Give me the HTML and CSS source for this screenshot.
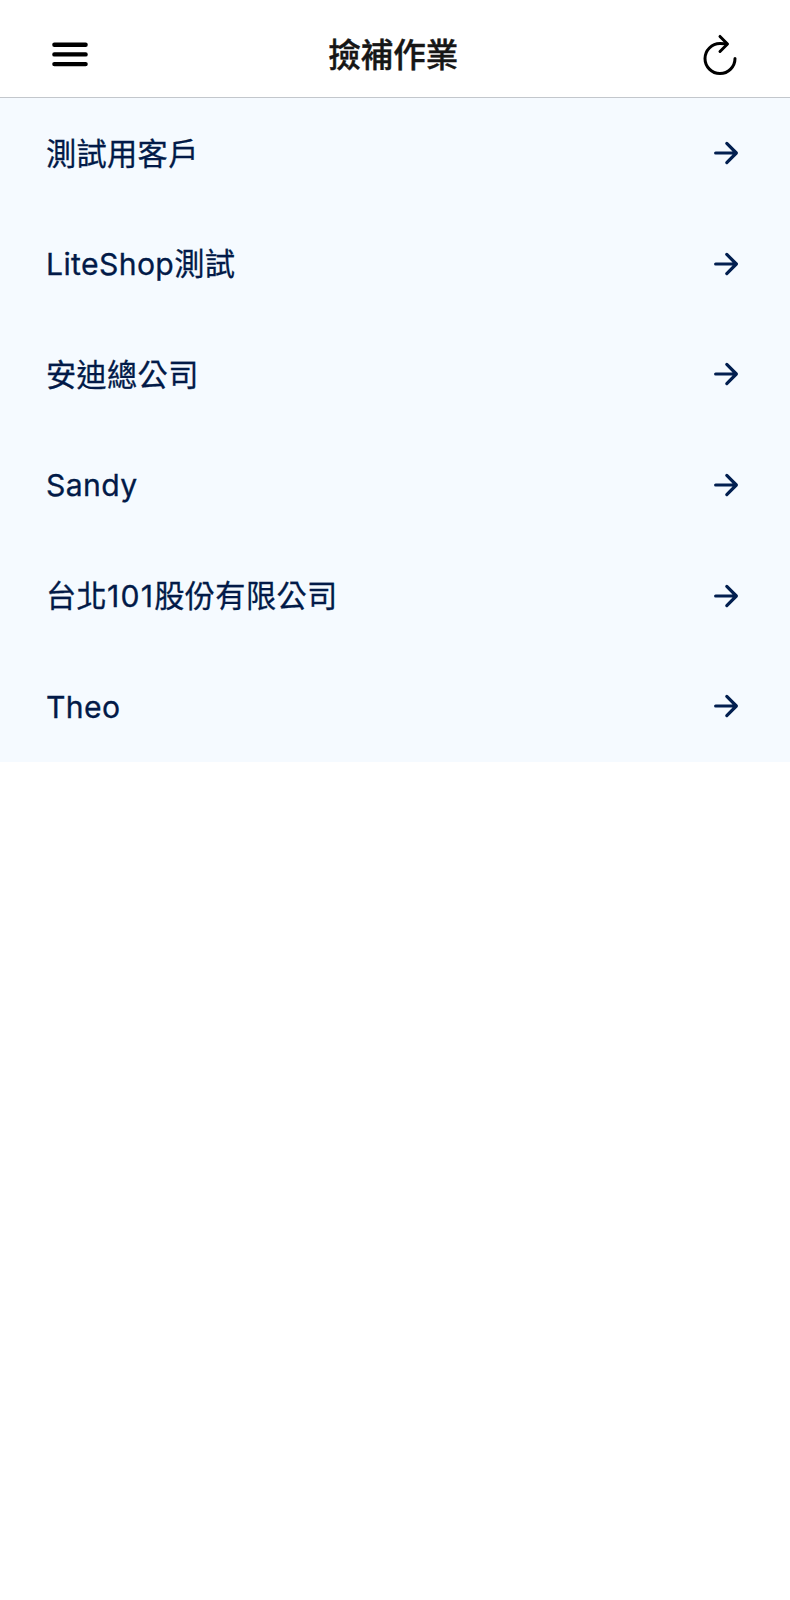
FILE: index.html
```html
<!DOCTYPE html>
<html lang="zh-Hant">
<head>
<meta charset="utf-8">
<title>撿補作業</title>
<link rel="stylesheet" href="styles.css">
</head>
<body>
<svg class="symbols" aria-hidden="true">
  <symbol id="arrow" viewBox="0 0 512 512"><path d="M268 112l144 144-144 144M392 256H100"/></symbol>
</svg>
<header class="header">
  <svg class="menu" viewBox="0 0 36 26"><path d="M2.4 2.7h31.2M2.4 12.4h31.2M2.4 22.1h31.2"/></svg>
  <h1 class="title">撿補作業</h1>
  <svg class="refresh" viewBox="0 0 512 512"><path d="M320 146s24.36-12-64-12a160 160 0 1 0 160 160"/><path d="M256 58l80 80-80 80"/></svg>
</header>
<main class="list">
  <div class="row"><span class="name">測試用客戶</span><svg class="arrow"><use href="#arrow"/></svg></div>
  <div class="row"><span class="name">LiteShop測試</span><svg class="arrow"><use href="#arrow"/></svg></div>
  <div class="row"><span class="name">安迪總公司</span><svg class="arrow"><use href="#arrow"/></svg></div>
  <div class="row"><span class="name">Sandy</span><svg class="arrow"><use href="#arrow"/></svg></div>
  <div class="row"><span class="name">台北<span class="digits">101</span>股份有限公司</span><svg class="arrow"><use href="#arrow"/></svg></div>
  <div class="row"><span class="name">Theo</span><svg class="arrow"><use href="#arrow"/></svg></div>
</main>
</body>
</html>
```
FILE: styles.css
```css
body {
  margin: 0;
  background: #fff;
  font-family: Inter, "Noto Sans CJK TC", sans-serif;
}
.symbols {
  display: none;
}
.header {
  box-sizing: border-box;
  height: 98px;
  padding: 12px 46px 0 51.5px;
  border-bottom: 1px solid #c3c7cc;
  display: grid;
  grid-template-columns: 48px 1fr 48px;
  align-items: center;
}
.menu {
  width: 36px;
  height: 26px;
  fill: none;
  stroke: #000;
  stroke-width: 4.4;
  stroke-linecap: round;
}
.title {
  margin: 0;
  padding: 3px 9px 0 0;
  text-align: center;
  font-size: 32.5px;
  line-height: 40px;
  font-weight: 500;
  -webkit-text-stroke: 0.4px #161616;
  color: #161616;
}
.refresh {
  width: 48px;
  height: 48px;
  fill: none;
  stroke: #000;
  stroke-width: 32;
  stroke-linecap: round;
  stroke-linejoin: round;
}
.list {
  background: #f5faff;
}
.row {
  box-sizing: border-box;
  height: 110.6px;
  padding: 0.8px 47px 0 46px;
  display: flex;
  align-items: center;
  justify-content: space-between;
}
.name {
  font-size: 30.2px;
  line-height: 40px;
  letter-spacing: 0.35px;
  -webkit-text-stroke: 0.3px #021a48;
  color: #021a48;
}
.digits {
  letter-spacing: 1.2px;
}
.arrow {
  width: 34px;
  height: 34px;
  margin-top: -1px;
  fill: none;
  stroke: #021f50;
  stroke-width: 48;
  stroke-linecap: round;
  stroke-linejoin: round;
}
```
